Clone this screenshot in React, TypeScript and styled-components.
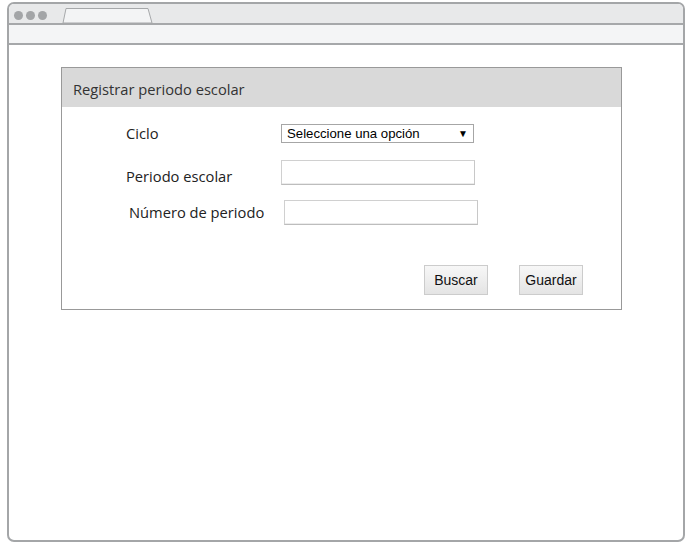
import React from "react";
import styled, { createGlobalStyle } from "styled-components";

const Global = createGlobalStyle`
  html, body { margin: 0; padding: 0; background: #ffffff; }
  body { font-family: "Open Sans", "Liberation Sans", sans-serif; }
  * { box-sizing: border-box; }
`;

const Page = styled.div`
  width: 694px;
  height: 549px;
  padding: 2px 9px 7px 7px;
`;

const Frame = styled.div`
  width: 678px;
  height: 540px;
  border: 2px solid #a4a6a8;
  border-radius: 7px;
  overflow: hidden;
  display: flex;
  flex-direction: column;
  background: #ffffff;
`;

const TabStrip = styled.div`
  height: 21px;
  background: #e8e9ea;
  display: flex;
  align-items: flex-end;
  padding-left: 5px;
  border-bottom: 2px solid #a6a8aa;
`;

const Dots = styled.div`
  display: flex;
  gap: 3px;
  align-self: center;
  margin-top: 3px;
`;

const Dot = styled.span`
  width: 9px;
  height: 9px;
  border-radius: 50%;
  background: #a3a5a7;
`;

const Tab = styled.svg`
  margin-left: 15px;
  display: block;
`;

const AddressBar = styled.div`
  height: 20px;
  background: #f4f5f6;
  border-bottom: 2px solid #a6a8aa;
`;

const Content = styled.div`
  flex: 1;
  padding: 22px 0 0 52px;
`;

const Panel = styled.section`
  width: 561px;
  border: 1px solid #999999;
  background: #ffffff;
`;

const PanelHeader = styled.header`
  height: 39px;
  background: #d9d9d9;
  display: flex;
  align-items: center;
  padding: 2px 0 0 11px;
  font-size: 14.7px;
  color: #333333;
`;

const PanelBody = styled.div`
  padding: 17px 38px 14px 64px;
  display: flex;
  flex-direction: column;
`;

const Row = styled.div<{ $shift?: number; $top: number; $h: number }>`
  display: flex;
  align-items: center;
  height: ${(p) => p.$h}px;
  margin-top: ${(p) => p.$top}px;
  margin-left: ${(p) => p.$shift ?? 0}px;
`;

const Label = styled.label<{ $dy?: number }>`
  width: 155px;
  font-size: 14.7px;
  color: #222222;
  position: relative;
  top: ${(p) => p.$dy ?? 0}px;
`;

const Select = styled.div`
  width: 193px;
  height: 19px;
  border: 1px solid #a6a6a6;
  display: flex;
  align-items: center;
  justify-content: space-between;
  padding: 0 5px 0 5px;
  font-family: "Liberation Sans", Arial, sans-serif;
  font-size: 13.2px;
  color: #000000;
  background: #ffffff;
`;

const Caret = styled.span`
  font-size: 10px;
  line-height: 1;
`;

const TextInput = styled.input`
  width: 194px;
  height: 25px;
  border: 1px solid #d0d0d0;
  border-bottom-color: #bdbdbd;
  border-right-color: #c8c8c8;
  box-shadow: inset 0 -1px 0 #ececec;
  background: #ffffff;
  outline: none;
  padding: 0 4px;
`;

const Actions = styled.div`
  display: flex;
  justify-content: flex-end;
  gap: 31px;
  margin-top: 40px;
`;

const Button = styled.button`
  width: 64px;
  height: 30px;
  border: 1px solid #cccccc;
  background: linear-gradient(#f7f7f7, #e4e4e4);
  font-family: "Liberation Sans", Arial, sans-serif;
  font-size: 14px;
  color: #111111;
  padding: 0;
  cursor: pointer;
`;

export default function App() {
  return (
    <Page>
      <Global />
      <Frame>
        <TabStrip>
          <Dots>
            <Dot />
            <Dot />
            <Dot />
          </Dots>
          <Tab width="92" height="16" viewBox="0 0 92 16">
            <path d="M1 16 L4 1.5 L86 1.5 L90 16 Z" fill="#f3f4f5" stroke="#a6a8aa" strokeWidth="1" />
          </Tab>
        </TabStrip>
        <AddressBar />
        <Content>
          <Panel>
            <PanelHeader>Registrar periodo escolar</PanelHeader>
            <PanelBody>
              <Row $top={0} $h={19}>
                <Label $dy={-1}>Ciclo</Label>
                <Select>
                  <span>Seleccione una opción</span>
                  <Caret>▼</Caret>
                </Select>
              </Row>
              <Row $top={16} $h={26}>
                <Label $dy={4}>Periodo escolar</Label>
                <TextInput />
              </Row>
              <Row $top={14} $h={26} $shift={3}>
                <Label $dy={0}>Número de periodo</Label>
                <TextInput />
              </Row>
              <Actions>
                <Button>Buscar</Button>
                <Button>Guardar</Button>
              </Actions>
            </PanelBody>
          </Panel>
        </Content>
      </Frame>
    </Page>
  );
}
